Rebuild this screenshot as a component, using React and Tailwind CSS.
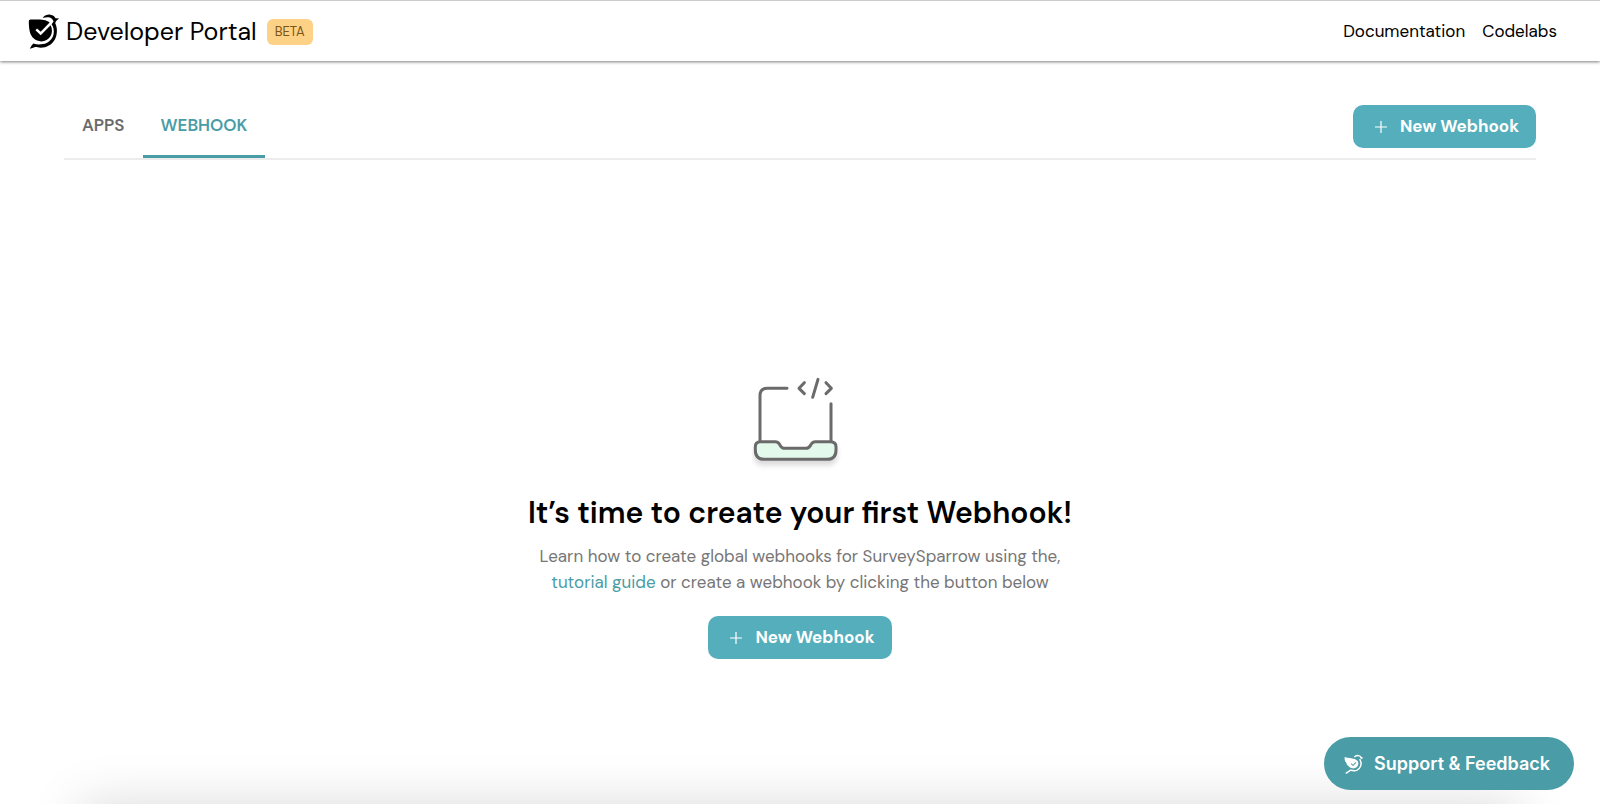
import React from "react";

function SparrowLogo({ className }) {
  return (
    <svg viewBox="82 40 96 106" className={className} aria-hidden="true">
      <path
        fill="currentColor"
        d="M84 62 Q84 57 89 57 L112 57 C130 57 140 61 147 66 L120 94 L109 84 L104 89 L120 104 L150 74 C156 85 155 98 150 107 C144 118 133 123 122 123 C104 122 91 111 87 94 C85 84 84 74 84 62 Z"
      />
      <path
        fill="currentColor"
        d="M126 52 C132 44 141 41 149 42 C158 43 163 48 165 53 L176 54 C170 58 166 61 164 68 C171 82 171 102 163 117 C154 133 138 142 120 142 C110 142 107 139 101 141 Q96 144 87 145 C91 139 92 134 98 129 C107 133 117 133 127 131 C143 128 155 117 159 101 C161 90 159 79 153 71 L159 63 C156 55 151 51 145 50 C139 49 132 50 126 52 Z"
      />
    </svg>
  );
}

function SparrowOutline({ className }) {
  return (
    <svg viewBox="15 15 60 60" className={className} fill="none" stroke="currentColor" strokeLinecap="round" aria-hidden="true">
      <path
        fill="currentColor"
        stroke="none"
        fillRule="evenodd"
        d="M17 24 C28 28 38 27 47 30 C56 33 59 39 58 45 C57 54 49 59 41 58 C35 57 30 54 28 50 C24 49 22 46 23 43 C18 38 16 31 17 24 Z M37 43 L35 45 L42 51 L52 41 L50 39 L42 47 Z"
      />
      <path strokeWidth="4.5" d="M63 32 C70 44 65 59 53 64 C45 67 40 63 34 64 C29 66 28 70 22 72" />
      <path strokeWidth="4" d="M47 23 C53 18 64 18 66 26" />
      <path fill="currentColor" stroke="none" d="M64 22 L73 27 L66 31 Z" />
    </svg>
  );
}

function WebhookIllustration() {
  return (
    <svg
      viewBox="66 40 288 300"
      className="h-[100px] w-24"
      fill="none"
      stroke="#6b6b6b"
      strokeWidth="9"
      strokeLinecap="round"
      strokeLinejoin="round"
      aria-hidden="true"
    >
      <defs>
        <filter id="base-shadow" x="-20%" y="-30%" width="140%" height="200%">
          <feDropShadow dx="0" dy="14" stdDeviation="8" floodColor="#000" floodOpacity="0.14" />
        </filter>
      </defs>
      <path d="M90 243 V108 Q90 86 112 86 H171" />
      <path d="M303 132 V243" />
      <path
        filter="url(#base-shadow)"
        fill="#e3f9eb"
        d="M91 246 H136 Q144 246 148 253 L151 258 Q156 266 164 266 H228 Q236 266 241 258 L244 253 Q248 246 256 246 H301 Q318 246 318 261 V271 Q318 299 292 299 H102 Q76 299 76 271 V261 Q76 246 91 246 Z"
      />
      <path d="M223 69 L207 86 L223 102" />
      <path d="M264 59 L248 113" />
      <path d="M288 69 L304 86 L288 102" />
    </svg>
  );
}

function NewWebhookButton() {
  return (
    <button
      type="button"
      className="flex h-[43px] cursor-pointer items-center gap-3 rounded-[10px] bg-[#55aebb] pl-[21px] pr-[17px] text-[17px] font-bold text-white"
    >
      <svg viewBox="0 0 14 14" className="size-3.5" stroke="currentColor" strokeWidth="1.2" aria-hidden="true">
        <path d="M7 1 V13 M1 7 H13" />
      </svg>
      New Webhook
    </button>
  );
}

export default function App() {
  return (
    <div className="relative flex min-h-screen flex-col overflow-hidden bg-white font-['DM_Sans','Inter',sans-serif] text-black">
      <header className="flex h-[61px] items-center justify-between border-t border-[#cccccc] pt-px pl-7 pr-[43px] shadow-[0_1px_3px_rgba(0,0,0,0.5)]">
        <div className="flex items-center">
          <SparrowLogo className="h-[35px] w-8" />
          <h1 className="ml-1.5 text-[25px]">Developer Portal</h1>
          <span className="ml-2.5 flex h-[26px] items-center rounded-md bg-[#fdd287] px-2 text-[13px] text-[#7a5514]">
            BETA
          </span>
        </div>
        <nav className="flex gap-[17px] text-[17px]">
          <a href="#documentation">Documentation</a>
          <a href="#codelabs">Codelabs</a>
        </nav>
      </header>

      <main className="flex grow flex-col px-16">
        <div className="mt-[37px] flex h-[62px] items-stretch justify-between border-b-2 border-[#ececec]">
          <nav className="flex text-[17px] font-semibold">
            <a href="#apps" className="flex items-center border-b-3 border-transparent px-[18px] pb-0.5 text-[#6b6b6b]">
              APPS
            </a>
            <a
              href="#webhook"
              aria-current="page"
              className="flex items-center border-b-3 border-[#4a9ca6] px-[18px] pb-0.5 text-[#4a9ca6]"
            >
              WEBHOOK
            </a>
          </nav>
          <div className="pt-[7px]">
            <NewWebhookButton />
          </div>
        </div>

        <section className="mt-[213px] flex flex-col items-center text-center">
          <WebhookIllustration />
          <h2 className="mt-5 text-[30px] leading-10 font-semibold">It’s time to create your first Webhook!</h2>
          <p className="mt-2.5 text-[17px] leading-[26px] text-[#767676]">
            Learn how to create global webhooks for SurveySparrow using the,
            <br />
            <a href="#tutorial" className="text-[#4a9ca6]">
              tutorial guide
            </a>{" "}
            or create a webhook by clicking the button below
          </p>
          <div className="mt-[21px]">
            <NewWebhookButton />
          </div>
        </section>
      </main>

      <div className="absolute inset-x-20 top-full h-24 shadow-[0_0_52px_rgba(0,0,0,0.15)]" />

      <button
        type="button"
        className="fixed right-[26px] bottom-3.5 flex h-[53px] cursor-pointer items-center gap-2.5 rounded-full bg-[#4a9ca6] pl-5 pr-6 font-['Inter',sans-serif] text-lg font-semibold text-white"
      >
        <SparrowOutline className="size-5" />
        Support &amp; Feedback
      </button>
    </div>
  );
}
